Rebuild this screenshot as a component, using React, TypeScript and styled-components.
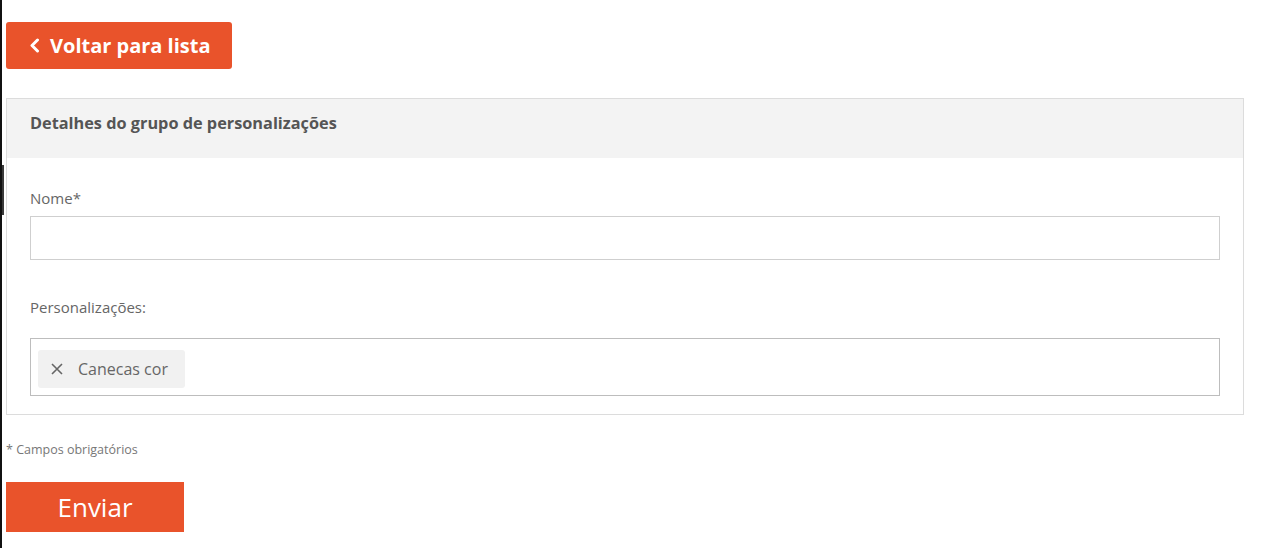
import React from "react";
import styled, { createGlobalStyle } from "styled-components";

const GlobalStyle = createGlobalStyle`
  html, body { margin: 0; padding: 0; background: #ffffff; }
  body { font-family: "Open Sans", "Noto Sans", sans-serif; color: #555; }
  * { box-sizing: border-box; }
`;

const Page = styled.div`
  min-height: 548px;
  border-left: 2px solid #111;
  background-image: linear-gradient(#3a3a3a, #3a3a3a);
  background-repeat: no-repeat;
  background-position: 0 165px;
  background-size: 2px 50px;
  padding: 22px 36px 16px 4px;
`;

const BackButton = styled.button`
  display: inline-flex;
  align-items: center;
  gap: 10px;
  height: 47px;
  padding: 0 21px 0 23px;
  background: #e9532b;
  border: none;
  border-radius: 3px;
  color: #fff;
  font-family: inherit;
  font-weight: 700;
  font-size: 20px;
  cursor: pointer;
`;

const Panel = styled.section`
  margin-top: 29px;
  border: 1px solid #dcdcdc;
  background: #fff;
`;

const PanelHeader = styled.header`
  height: 59px;
  background: #f3f3f3;
  display: flex;
  align-items: flex-start;
  padding: 12px 23px 0;
  font-weight: 700;
  font-size: 16.3px;
  line-height: 24px;
  color: #555;
`;

const PanelBody = styled.div`
  padding: 30px 23px 18px;
`;

const Label = styled.label<{ $gap: number }>`
  display: block;
  font-size: 15px;
  line-height: 20px;
  color: #666;
  margin-bottom: ${(p) => p.$gap}px;
`;

const TextInput = styled.input`
  display: block;
  width: 100%;
  height: 44px;
  border: 1px solid #cfcfcf;
  background: #fff;
  margin-bottom: 37px;
  font-family: inherit;
  font-size: 15px;
  padding: 0 12px;
`;

const MultiSelect = styled.div`
  height: 58px;
  border: 1px solid #bdbdbd;
  display: flex;
  align-items: flex-start;
  padding: 11px 7px 0;
`;

const Chip = styled.div`
  display: inline-flex;
  align-items: center;
  gap: 14px;
  height: 38px;
  padding: 0 17px 0 12px;
  background: #f1f1f1;
  border-radius: 3px;
  font-size: 16px;
  color: #666;
`;

const ChipRemove = styled.span`
  display: inline-flex;
  width: 14px;
  justify-content: center;
  color: #666;
`;

const Required = styled.p`
  margin: 26px 0 0 0;
  font-size: 12.5px;
  color: #777;
`;

const SubmitButton = styled.button`
  margin-top: 24px;
  width: 178px;
  height: 50px;
  background: #e9532b;
  border: none;
  border-radius: 0;
  color: #fff;
  font-family: inherit;
  font-size: 26px;
  cursor: pointer;
`;

export default function App() {
  return (
    <>
      <GlobalStyle />
      <Page>
        <BackButton>
          <svg width="11" height="15" viewBox="0 0 11 15" aria-hidden="true">
            <path d="M8.5 2 L3 7.5 L8.5 13" fill="none" stroke="#fff" strokeWidth="3" strokeLinecap="round" strokeLinejoin="round" />
          </svg>
          Voltar para lista
        </BackButton>
        <Panel>
          <PanelHeader>Detalhes do grupo de personalizações</PanelHeader>
          <PanelBody>
            <Label $gap={8}>Nome*</Label>
            <TextInput type="text" />
            <Label $gap={21}>Personalizações:</Label>
            <MultiSelect>
              <Chip>
                <ChipRemove>
                  <svg width="12" height="12" viewBox="0 0 12 12" aria-hidden="true">
                    <path d="M1 1 L11 11 M11 1 L1 11" stroke="#666" strokeWidth="1.6" />
                  </svg>
                </ChipRemove>
                Canecas cor
              </Chip>
            </MultiSelect>
          </PanelBody>
        </Panel>
        <Required>* Campos obrigatórios</Required>
        <SubmitButton>Enviar</SubmitButton>
      </Page>
    </>
  );
}
